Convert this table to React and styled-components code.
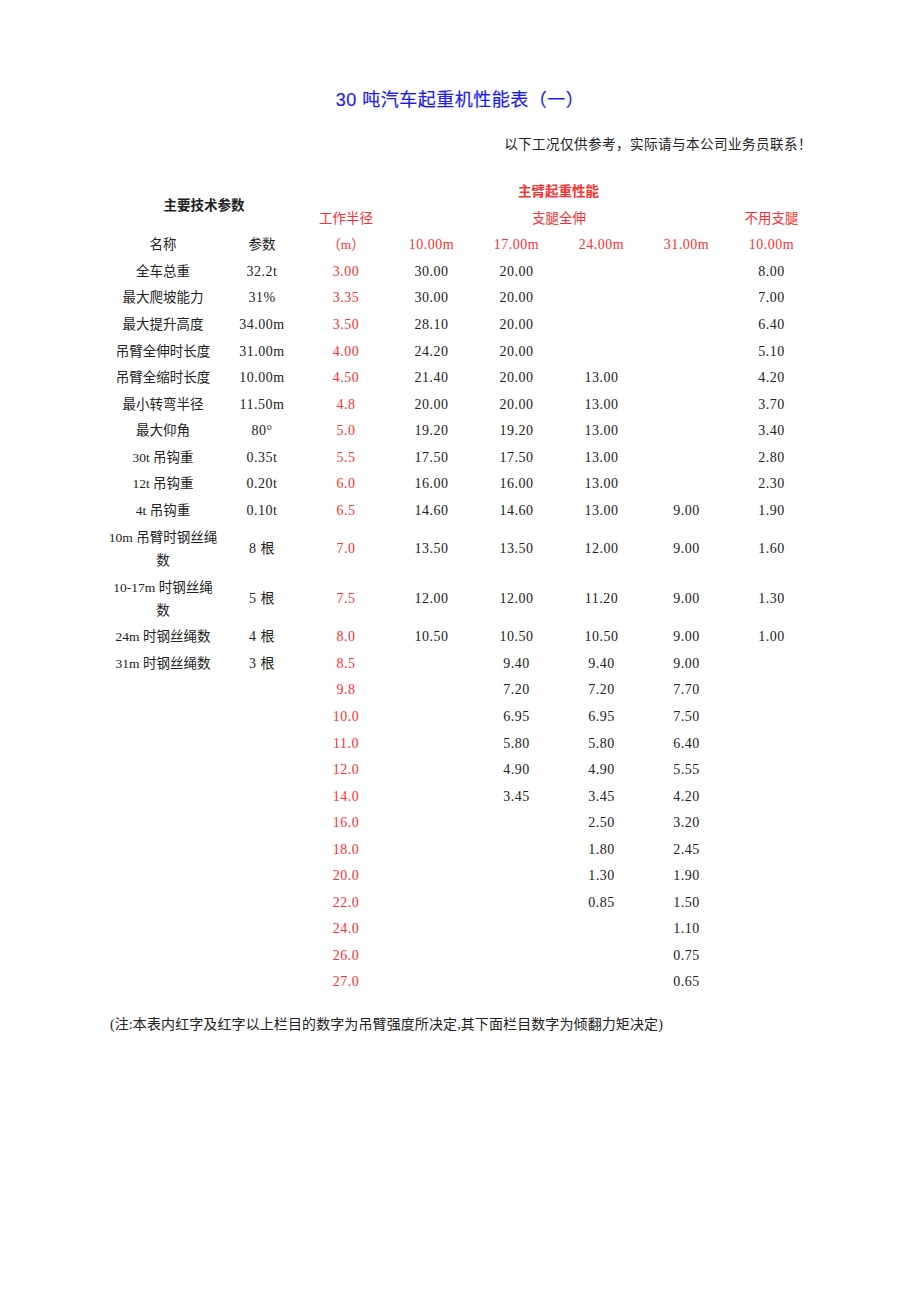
import React from 'react';
import styled, { createGlobalStyle } from 'styled-components';

const GlobalStyle = createGlobalStyle`
  html, body { margin: 0; padding: 0; background: #ffffff; }
  body {
    font-family: "Liberation Serif", "Noto Sans CJK SC", serif;
    color: #222222;
  }
`;

const RED = '#ff3030';

const Page = styled.div`
  width: 920px;
  min-height: 1302px;
  box-sizing: border-box;
  padding-top: 87px;
`;

const Title = styled.h1`
  margin: 0;
  text-align: center;
  font-family: "Liberation Sans", "Noto Sans CJK SC", sans-serif;
  font-weight: normal;
  font-size: 18px;
  letter-spacing: 0.5px;
  line-height: 26px;
  color: #1c1cf2;
  -webkit-text-stroke: 0.2px #1c1cf2;
`;

const Notice = styled.p`
  margin: 22px 0 0;
  padding-right: 108px;
  text-align: right;
  font-size: 13.6px;
  letter-spacing: 0.4px;
  line-height: 20px;
  color: #222222;
`;

const Sheet = styled.table`
  margin: 24px 0 0 105px;
  border-collapse: collapse;
  border-spacing: 0;
  table-layout: fixed;
  width: 709px;
`;

const Col = styled.col`
  width: ${(p) => p.$w}px;
`;

const Row = styled.tr`
  height: ${(p) => (p.$tall ? 50 : 26.56)}px;
`;

const Cell = styled.td`
  padding: 0;
  text-align: center;
  vertical-align: middle;
  white-space: nowrap;
  font-size: ${(p) => (p.$num ? '14px' : '13.5px')};
  letter-spacing: ${(p) => (p.$num ? '0.5px' : '0')};
  line-height: ${(p) => (p.$wrap ? '23.5px' : '18px')};
  font-weight: ${(p) => (p.$bold ? 'bold' : 'normal')};
  color: ${(p) => (p.$red ? RED : '#222222')};
`;

const Footnote = styled.p`
  margin: 19.7px 0 0;
  padding-left: 110px;
  font-size: 14px;
  letter-spacing: 0.1px;
  line-height: 20px;
  color: #222222;
`;

const params = [
  ['全车总重', '32.2t'],
  ['最大爬坡能力', '31%'],
  ['最大提升高度', '34.00m'],
  ['吊臂全伸时长度', '31.00m'],
  ['吊臂全缩时长度', '10.00m'],
  ['最小转弯半径', '11.50m'],
  ['最大仰角', '80°'],
  ['30t 吊钩重', '0.35t'],
  ['12t 吊钩重', '0.20t'],
  ['4t 吊钩重', '0.10t'],
  [['10m 吊臂时钢丝绳', '数'], '8 根'],
  [['10-17m 时钢丝绳', '数'], '5 根'],
  ['24m 时钢丝绳数', '4 根'],
  ['31m 时钢丝绳数', '3 根'],
];

const loads = [
  ['3.00', '30.00', '20.00', '', '', '8.00'],
  ['3.35', '30.00', '20.00', '', '', '7.00'],
  ['3.50', '28.10', '20.00', '', '', '6.40'],
  ['4.00', '24.20', '20.00', '', '', '5.10'],
  ['4.50', '21.40', '20.00', '13.00', '', '4.20'],
  ['4.8', '20.00', '20.00', '13.00', '', '3.70'],
  ['5.0', '19.20', '19.20', '13.00', '', '3.40'],
  ['5.5', '17.50', '17.50', '13.00', '', '2.80'],
  ['6.0', '16.00', '16.00', '13.00', '', '2.30'],
  ['6.5', '14.60', '14.60', '13.00', '9.00', '1.90'],
  ['7.0', '13.50', '13.50', '12.00', '9.00', '1.60'],
  ['7.5', '12.00', '12.00', '11.20', '9.00', '1.30'],
  ['8.0', '10.50', '10.50', '10.50', '9.00', '1.00'],
  ['8.5', '', '9.40', '9.40', '9.00', ''],
  ['9.8', '', '7.20', '7.20', '7.70', ''],
  ['10.0', '', '6.95', '6.95', '7.50', ''],
  ['11.0', '', '5.80', '5.80', '6.40', ''],
  ['12.0', '', '4.90', '4.90', '5.55', ''],
  ['14.0', '', '3.45', '3.45', '4.20', ''],
  ['16.0', '', '', '2.50', '3.20', ''],
  ['18.0', '', '', '1.80', '2.45', ''],
  ['20.0', '', '', '1.30', '1.90', ''],
  ['22.0', '', '', '0.85', '1.50', ''],
  ['24.0', '', '', '', '1.10', ''],
  ['26.0', '', '', '', '0.75', ''],
  ['27.0', '', '', '', '0.65', ''],
];

const widths = [116, 82, 86, 85, 85, 85, 85, 85];
const spans = ['10.00m', '17.00m', '24.00m', '31.00m', '10.00m'];

export default function App() {
  return (
    <Page>
      <GlobalStyle />
      <Title>30 吨汽车起重机性能表（一）</Title>
      <Notice>以下工况仅供参考，实际请与本公司业务员联系！</Notice>
      <Sheet>
        <colgroup>
          {widths.map((w, i) => (
            <Col key={i} $w={w} />
          ))}
        </colgroup>
        <tbody>
          <Row>
            <Cell colSpan={2} rowSpan={2} $bold>
              主要技术参数
            </Cell>
            <Cell colSpan={6} $bold $red>
              主臂起重性能
            </Cell>
          </Row>
          <Row>
            <Cell $red>工作半径</Cell>
            <Cell colSpan={4} $red>
              支腿全伸
            </Cell>
            <Cell $red>不用支腿</Cell>
          </Row>
          <Row>
            <Cell>名称</Cell>
            <Cell>参数</Cell>
            <Cell $red>（m）</Cell>
            {spans.map((s, i) => (
              <Cell key={i} $red $num>
                {s}
              </Cell>
            ))}
          </Row>
          {loads.map((load, i) => {
            const p = params[i];
            const wrapped = p && Array.isArray(p[0]);
            return (
              <Row key={i} $tall={wrapped}>
                <Cell $wrap={wrapped}>
                  {p ? (wrapped ? (<>{p[0][0]}<br />{p[0][1]}</>) : p[0]) : ''}
                </Cell>
                <Cell $num>{p ? p[1] : ''}</Cell>
                <Cell $red $num>
                  {load[0]}
                </Cell>
                {load.slice(1).map((v, j) => (
                  <Cell key={j} $num>
                    {v}
                  </Cell>
                ))}
              </Row>
            );
          })}
        </tbody>
      </Sheet>
      <Footnote>(注:本表内红字及红字以上栏目的数字为吊臂强度所决定,其下面栏目数字为倾翻力矩决定)</Footnote>
    </Page>
  );
}
